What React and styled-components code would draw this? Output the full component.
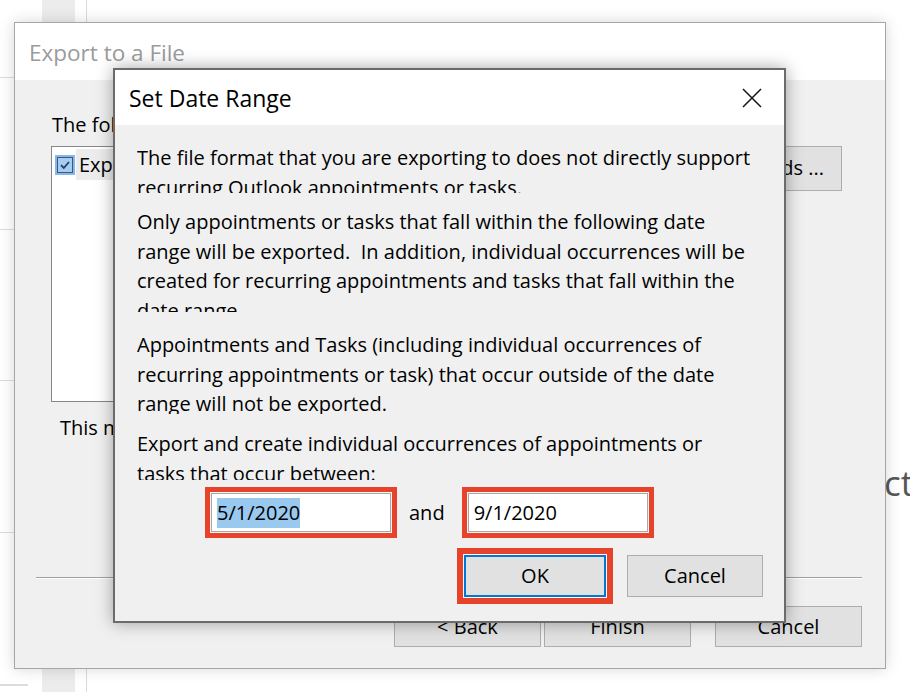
import React from 'react';
import styled, { createGlobalStyle } from 'styled-components';

const GlobalStyle = createGlobalStyle`
  html, body {
    margin: 0;
    padding: 0;
  }
  body {
    width: 910px;
    height: 692px;
    overflow: hidden;
    background: #fff;
    font-family: "Segoe UI", "Open Sans", sans-serif;
    color: #000;
  }
`

const Desktop = styled.div`
  position: relative;
  width: 910px;
  height: 692px;
  overflow: hidden;
  background: #fff;
`
const GreyColumn = styled.div`
  position: absolute;
  left: 42px;
  top: 0;
  width: 33px;
  height: 100%;
  background: #ececec;
`
const GridV = styled.div`
  position: absolute;
  left: 86px;
  top: 0;
  width: 1px;
  height: 100%;
  background: #dadada;
`
const GridH = styled.div`
  position: absolute;
  left: 0;
  top: ${p => p.$top}px;
  width: 28px;
  height: ${p => p.$thick ? 2 : 1}px;
  background: #dcdcdc;
`
const BehindText = styled.div`
  position: absolute;
  left: 884px;
  top: 462px;
  font-size: 35px;
  line-height: 1.2;
  color: #575757;
  white-space: nowrap;
`

const ExportWindow = styled.div`
  position: absolute;
  left: 14px;
  top: 22px;
  width: 872px;
  height: 647px;
  box-sizing: border-box;
  border: 1px solid #a6a6a6;
  background: #f0f0f0;
  box-shadow: 0 0 14px rgba(0, 0, 0, 0.16);
  display: flex;
  flex-direction: column;
`
const ExportTitle = styled.div`
  height: 57px;
  flex-shrink: 0;
  background: #fff;
  display: flex;
  align-items: center;
  padding: 2px 0 0 14px;
  box-sizing: border-box;
  font-size: 22.5px;
  color: #9b9b9b;
`
const ExportBody = styled.div`
  flex: 1;
  display: flex;
  flex-direction: column;
  padding: 30px 23px 21px 21px;
  font-size: 20px;
  line-height: 29.5px;
`
const Intro = styled.div`
  padding-left: 16px;
  white-space: nowrap;
`
const ListRow = styled.div`
  display: flex;
  align-items: flex-start;
  margin-top: 6px;
  padding: 0 20px 0 15px;
`
const ListBox = styled.div`
  width: 560px;
  height: 256px;
  box-sizing: border-box;
  border: 1px solid #828790;
  background: #fff;
  padding: 2px 0 0 5px;
`
const ListItem = styled.div`
  display: flex;
  align-items: center;
  height: 32px;
`
const Check = styled.div`
  width: 16px;
  height: 16px;
  box-sizing: border-box;
  border: 1px solid #2b5d92;
  background: #a9cbee;
  display: flex;
  align-items: center;
  justify-content: center;
  outline: 2px solid #8db7e3;
`
const ItemText = styled.span`
  background: #ececec;
  padding: 1px 8px 1px 3px;
  margin-left: 3px;
  white-space: nowrap;
`
const MapButton = styled.button`
  margin-left: auto;
  height: 45px;
  padding: 0 17px;
  border: 1px solid #adadad;
  background: #e1e1e1;
  font: inherit;
  color: #000;
  white-space: nowrap;
`
const Note = styled.div`
  margin-top: 11px;
  padding-left: 24px;
  white-space: nowrap;
`
const Separator = styled.div`
  margin-top: auto;
  height: 1px;
  background: #a0a0a0;
  border-bottom: 1px solid #fff;
`
const ButtonRow = styled.div`
  display: flex;
  justify-content: flex-end;
  margin-top: 27px;
`
const WinButton = styled.button`
  width: 147px;
  height: 41px;
  margin-left: ${p => p.$gap || 0}px;
  border: 1px solid #adadad;
  background: #e1e1e1;
  font: inherit;
  font-size: 20px;
  color: #000;
`

const Modal = styled.div`
  position: absolute;
  left: 113px;
  top: 68px;
  width: 673px;
  height: 555px;
  box-sizing: border-box;
  border: 2px solid #6b6b6b;
  background: #f0f0f0;
  box-shadow: 0 0 16px rgba(0, 0, 0, 0.35);
  display: flex;
  flex-direction: column;
`
const ModalTitle = styled.div`
  height: 55px;
  flex-shrink: 0;
  background: #fff;
  display: flex;
  align-items: center;
  justify-content: space-between;
  padding: 0 22px 0 14px;
  font-size: 23px;
`
const CloseButton = styled.div`
  width: 20px;
  height: 20px;
  display: flex;
`
const ModalBody = styled.div`
  flex: 1;
  display: flex;
  flex-direction: column;
  padding: 18px 21px 0 22px;
  font-size: 20px;
  line-height: 29.5px;
`
const Para = styled.div`
  height: ${p => p.$h}px;
  margin-top: ${p => p.$mt || 0}px;
  overflow: hidden;
  white-space: pre;
`
const DateRow = styled.div`
  display: flex;
  align-items: center;
  margin-top: 7px;
  padding-left: 68px;
`
const RedFrame = styled.div`
  border: ${p => p.$w || 5}px solid #e6432a;
  padding: 1px;
  background: #f6f6f6;
  display: flex;
`
const DateField = styled.div`
  width: 180px;
  height: 39px;
  box-sizing: border-box;
  border: 1px solid #a8a8a8;
  background: #fff;
  display: flex;
  align-items: center;
  padding-left: 5px;
`
const Selected = styled.span`
  background: #99c9ef;
  line-height: 30px;
`
const And = styled.span`
  margin: 0 17px 0 12px;
`
const ActionRow = styled.div`
  display: flex;
  justify-content: flex-end;
  align-items: center;
  gap: 14px;
  margin-top: 10px;
`
const DialogButton = styled.button`
  width: ${p => p.$w}px;
  height: 42px;
  box-sizing: border-box;
  border: ${p => p.$default ? '2px solid #0078d7' : '1px solid #adadad'};
  background: #e1e1e1;
  font: inherit;
  font-size: 20px;
  color: #000;
`

const CheckMark = () => (
  <svg width="12" height="12" viewBox="0 0 12 12">
    <path d="M2 6.2 L4.8 9 L10 3" fill="none" stroke="#1d3f66" strokeWidth="1.8" />
  </svg>
)

const CloseIcon = () => (
  <svg width="20" height="20" viewBox="0 0 20 20">
    <path d="M1 1 L19 19 M19 1 L1 19" stroke="#1b1b1b" strokeWidth="1.6" />
  </svg>
)

const App = () => {
  return (
    <>
      <GlobalStyle />
      <Desktop>
        <GreyColumn />
        <GridV />
        {[77, 229, 380, 532].map(t => <GridH key={t} $top={t} />)}
        <GridH $top={684} $thick />
        <BehindText>ct</BehindText>

        <ExportWindow>
          <ExportTitle>Export to a File</ExportTitle>
          <ExportBody>
            <Intro>The following actions will be performed:</Intro>
            <ListRow>
              <ListBox>
                <ListItem>
                  <Check><CheckMark /></Check>
                  <ItemText>Export "Calendar" from folder: Calendar</ItemText>
                </ListItem>
              </ListBox>
              <MapButton>Map Custom Fields ...</MapButton>
            </ListRow>
            <Note>This may take a few minutes and cannot be canceled.</Note>
            <Separator />
            <ButtonRow>
              <WinButton>&lt; Back</WinButton>
              <WinButton $gap={3}>Finish</WinButton>
              <WinButton $gap={24}>Cancel</WinButton>
            </ButtonRow>
          </ExportBody>
        </ExportWindow>

        <Modal>
          <ModalTitle>
            <span>Set Date Range</span>
            <CloseButton><CloseIcon /></CloseButton>
          </ModalTitle>
          <ModalBody>
            <Para $h={50}>{`The file format that you are exporting to does not directly support
recurring Outlook appointments or tasks.`}</Para>
            <Para $h={105} $mt={14}>{`Only appointments or tasks that fall within the following date
range will be exported.  In addition, individual occurrences will be
created for recurring appointments and tasks that fall within the
date range.`}</Para>
            <Para $h={84} $mt={18}>{`Appointments and Tasks (including individual occurrences of
recurring appointments or task) that occur outside of the date
range will not be exported.`}</Para>
            <Para $h={51} $mt={15}>{`Export and create individual occurrences of appointments or
tasks that occur between:`}</Para>
            <DateRow>
              <RedFrame>
                <DateField><Selected>5/1/2020</Selected></DateField>
              </RedFrame>
              <And>and</And>
              <RedFrame>
                <DateField>9/1/2020</DateField>
              </RedFrame>
            </DateRow>
            <ActionRow>
              <RedFrame $w={6}>
                <DialogButton $w={142} $default>OK</DialogButton>
              </RedFrame>
              <DialogButton $w={136}>Cancel</DialogButton>
            </ActionRow>
          </ModalBody>
        </Modal>
      </Desktop>
    </>
  )
}

export default App
